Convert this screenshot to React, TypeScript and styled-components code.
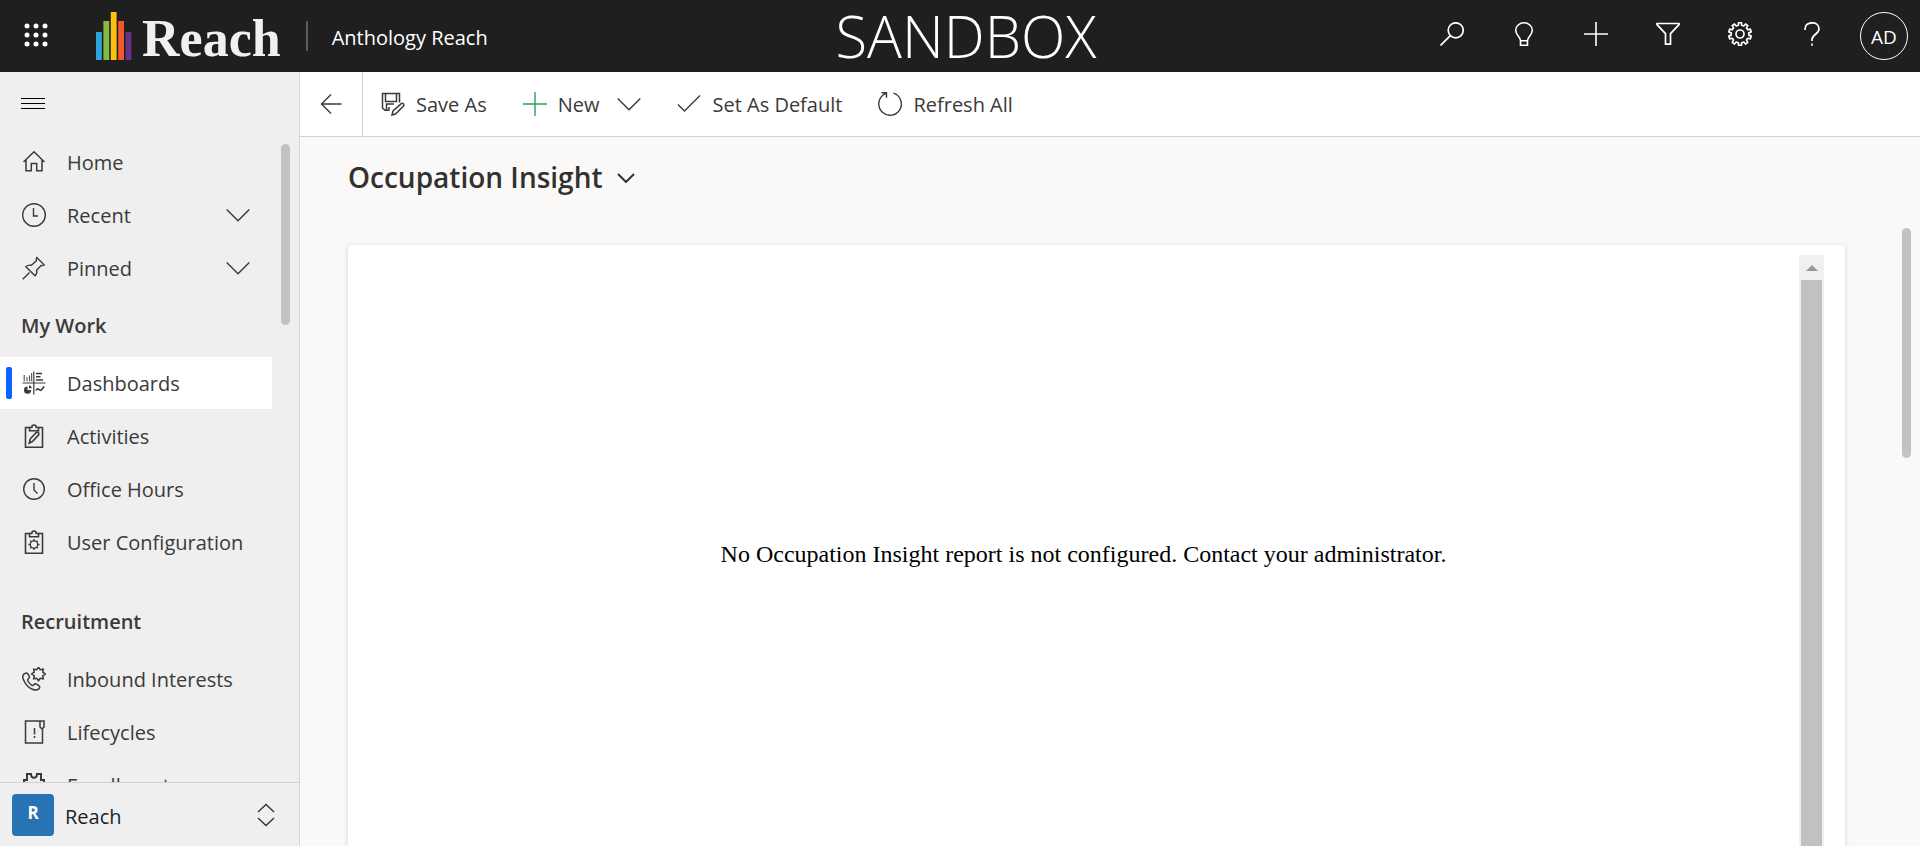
import React from "react";
import styled, { createGlobalStyle, css } from "styled-components";

const GlobalStyle = createGlobalStyle`
  *, *::before, *::after { box-sizing: border-box; }
  html, body { margin: 0; height: 100%; overflow: hidden; }
  body {
    font-family: "Segoe UI", "Open Sans", "Noto Sans", sans-serif;
    font-size: 20px;
    line-height: 28px;
    color: #3b3a39;
    background: #faf9f8;
  }
  button { font: inherit; color: inherit; background: none; border: 0; padding: 0; cursor: pointer; }
  a { color: inherit; text-decoration: none; }
`;

const Page = styled.div`
  display: flex;
  flex-direction: column;
  height: 100vh;
`;

/* ---------- top bar ---------- */

const TopBar = styled.header`
  display: grid;
  grid-template-columns: 1fr auto 1fr;
  flex: none;
  height: 72px;
  background: #1f1f1f;
  color: #fff;
`;

const TopGroup = styled.div<{ $end?: boolean }>`
  display: flex;
  align-items: center;
  justify-content: ${(p) => (p.$end ? "flex-end" : "flex-start")};
`;

const TopButton = styled.button`
  display: flex;
  align-items: center;
  justify-content: center;
  width: 72px;
  height: 72px;
  padding-bottom: 4px;
`;

const WaffleButton = styled(TopButton)`
  width: 71px;
  padding-bottom: 2px;
`;

const AvatarButton = styled(TopButton)`
  padding: 0;
`;

const Avatar = styled.span`
  display: flex;
  align-items: center;
  justify-content: center;
  width: 48px;
  height: 48px;
  border: 1px solid #fff;
  border-radius: 50%;
  font-size: 19px;
  padding-top: 2px;
`;

const Brand = styled.a`
  display: flex;
  align-items: center;
  gap: 10px;
  height: 72px;
  padding: 0 25px;
`;

const BrandName = styled.span`
  font-family: "Liberation Serif", serif;
  font-weight: 700;
  font-size: 52px;
  line-height: 72px;
  padding-top: 6px;
  color: #f0f0f0;
`;

const Divider = styled.span`
  width: 2px;
  height: 30px;
  background: #5c5c5c;
`;

const AppTitle = styled.span`
  padding: 3px 0 0 24px;
  white-space: nowrap;
`;

const Environment = styled.div`
  padding-left: 12px;
  font-size: 58px;
  font-weight: 300;
  line-height: 72px;
`;

/* ---------- body ---------- */

const Body = styled.div`
  display: flex;
  flex: 1;
  min-height: 0;
`;

const Sidebar = styled.aside`
  display: flex;
  flex-direction: column;
  flex: none;
  width: 300px;
  background: #efefef;
  border-right: 1px solid #d6d6d6;
`;

const MenuButton = styled.button`
  display: flex;
  align-items: center;
  flex: none;
  height: 64px;
  padding: 0 21px;
`;

const NavArea = styled.div`
  display: flex;
  flex: 1;
  min-height: 0;
  overflow: hidden;
`;

const NavList = styled.nav`
  display: flex;
  flex-direction: column;
  flex: 1;
  gap: 1px;
`;

const navRow = css`
  display: flex;
  align-items: center;
  flex: none;
  width: 100%;
  height: 52px;
  padding: 0 22px 0 6px;
  text-align: left;
  white-space: nowrap;
`;

const NavLink = styled.a<{ $active?: boolean }>`
  ${navRow}
  background: ${(p) => (p.$active ? "#fff" : "transparent")};
`;

const NavButton = styled.button`
  ${navRow}
`;

const Marker = styled.span<{ $active?: boolean }>`
  flex: none;
  width: 6px;
  height: 32px;
  margin-right: 10px;
  border-radius: 2px;
  background: ${(p) => (p.$active ? "#0a62ff" : "transparent")};
`;

const NavLabel = styled.span`
  flex: 1;
  padding: 2px 0 0 21px;
`;

const NavHeading = styled.h2<{ $spaced?: boolean }>`
  flex: none;
  margin: ${(p) => (p.$spaced ? "22px" : "0")} 0 0;
  padding: 17px 0 16px 21px;
  font-size: 20px;
  line-height: 28px;
  font-weight: 600;
`;

const Rail = styled.div<{ $wide?: boolean }>`
  display: flex;
  justify-content: flex-end;
  flex: none;
  width: ${(p) => (p.$wide ? "75px" : "27px")};
  padding: ${(p) => (p.$wide ? "91px" : "8px")} 9px 0 0;
`;

const Thumb = styled.div<{ $height: string }>`
  width: 9px;
  height: ${(p) => p.$height};
  border-radius: 5px;
  background: #c2c2c2;
`;

const AreaSwitch = styled.button`
  display: flex;
  align-items: center;
  flex: none;
  height: 64px;
  padding: 0 24px 0 12px;
  border-top: 1px solid #d2d2d2;
  text-align: left;
`;

const AreaBadge = styled.span`
  width: 42px;
  height: 42px;
  border-radius: 4px;
  background: #2873b3;
  color: #fff;
  font-size: 17px;
  font-weight: 700;
  line-height: 37px;
  text-align: center;
`;

const AreaName = styled.span`
  flex: 1;
  padding: 4px 0 0 11px;
  font-weight: 500;
  color: #201f1e;
`;

/* ---------- main ---------- */

const Main = styled.main`
  display: flex;
  flex-direction: column;
  flex: 1;
  min-width: 0;
`;

const CommandBar = styled.div`
  display: flex;
  flex: none;
  height: 65px;
  background: #fff;
  border-bottom: 1px solid #d2d2d2;
`;

const BackButton = styled.button`
  display: flex;
  align-items: center;
  justify-content: center;
  width: 63px;
  border-right: 1px solid #d2d2d2;
`;

const Command = styled.button`
  display: flex;
  align-items: center;
  gap: 11px;
  padding: 0 18px;
  white-space: nowrap;
`;

const CommandLabel = styled.span`
  padding-top: 2px;
`;

const MenuArrow = styled.span`
  display: flex;
  padding-left: 7px;
`;

const Content = styled.div`
  display: flex;
  flex: 1;
  min-height: 0;
`;

const Dashboard = styled.div`
  display: flex;
  flex-direction: column;
  flex: 1;
  min-width: 0;
  padding-left: 48px;
`;

const TitleBar = styled.div`
  display: flex;
  align-items: flex-start;
  flex: none;
  height: 108px;
  padding-top: 20px;
`;

const TitleButton = styled.button`
  display: flex;
  align-items: center;
  gap: 14px;
`;

const Title = styled.h1`
  margin: 0;
  font-size: 28px;
  line-height: 40px;
  font-weight: 600;
  color: #323130;
`;

const Card = styled.section`
  display: flex;
  flex: 1;
  min-height: 0;
  padding: 10px 21px 0 24px;
  border-radius: 4px 4px 0 0;
  background: #fff;
  box-shadow: 0 1px 5px rgba(0, 0, 0, 0.16);
`;

const Report = styled.div`
  display: flex;
  align-items: center;
  justify-content: center;
  flex: 1;
  padding: 6px 4px 0 0;
`;

const Message = styled.p`
  margin: 0;
  font-family: "Times New Roman", "Liberation Serif", serif;
  font-size: 24px;
  line-height: 28px;
  color: #000;
`;

const ScrollTrack = styled.div`
  display: flex;
  flex-direction: column;
  width: 25px;
  background: #f0f0f0;
`;

const ScrollButton = styled.button`
  display: flex;
  align-items: center;
  justify-content: center;
  height: 25px;
`;

const ScrollThumb = styled.div`
  flex: 1;
  margin: 0 2px;
  background: #c1c1c1;
`;

/* ---------- icons ---------- */

type IconProps = { children: React.ReactNode; color?: string; weight?: number };

const Icon = ({ children, color = "currentColor", weight = 1.4 }: IconProps) => (
  <svg width="24" height="24" viewBox="0 0 24 24" fill="none" stroke={color} strokeWidth={weight} aria-hidden="true">
    {children}
  </svg>
);

const gearPath = (cx: number, cy: number, outer: number, inner: number, teeth: number, pointed = false) => {
  const pts: string[] = [];
  const step = (Math.PI * 2) / teeth;
  for (let i = 0; i < teeth; i++) {
    const a = i * step - Math.PI / 2;
    const spots: [number, number][] = pointed
      ? [[a, outer], [a + step / 2, inner]]
      : [[a - step * 0.2, outer], [a + step * 0.2, outer], [a + step * 0.3, inner], [a + step * 0.7, inner]];
    spots.forEach(([t, r]) => pts.push(`${(cx + r * Math.cos(t)).toFixed(2)} ${(cy + r * Math.sin(t)).toFixed(2)}`));
  }
  return `M${pts.join("L")}Z`;
};

const Chevron = () => <Icon><path d="M.7 6.5 12 17.8 23.300 6.500" /></Icon>;

const Clipboard = ({ children }: { children: React.ReactNode }) => (
  <Icon weight={1.6}>
    <path d="M7.5 3.5H3.500V23.200h17V3.500h-4" />
    <path d="M7.500 6.800V3.500h2.300c0-3.300 4.400-3.300 4.400 0h2.300v3.300z" />
    {children}
  </Icon>
);

const icons = {
  home: <Icon weight={1.5}><path d="M1.500 12 12 1.800 22.500 12M4 10v10.800h5.300v-7.300h5.400v7.300H20V10" /></Icon>,
  recent: <Icon><circle cx="12" cy="12" r="11.300" /><path d="M11.500 5v8H16" /></Icon>,
  pinned: <Icon><path d="M.7 23.300 7.600 16.400M14.800 1.500l7.500 7.500c-1.600 1-3.200.5-3.200.5l-4.500 4.800c.6 2.200.1 4-1.500 5.500L3.800 10.700c1.600-1.500 3.600-1.900 5.600-1.400l5-4.600s-.5-1.600.4-3.200z" /></Icon>,
  dashboards: (
    <Icon weight={1.2}>
      <path d="M.5 12h23M11.800.5v23" />
      <path d="M2.200 4v6.300M5 6v4.300M7.600 4.500v5.800M9.700 2v8.300" strokeWidth="1" />
      <path d="M14 2.500h6M14 5.800h4.500M14 9h7" strokeWidth="1.500" />
      <path d="M5.500 15.500v3.500h3.700a3.600 3.600 0 1 1-3.700-3.500z" fill="currentColor" stroke="none" />
      <path d="M7 14.300a3.200 3.200 0 0 1 2.800 2.900H7z" fill="currentColor" stroke="none" />
      <path d="M14 19.500c1-2 2-2 3-1s1.500 1.200 2.300.5l2.900-3.500" strokeWidth="1.600" />
    </Icon>
  ),
  activities: <Clipboard><path d="M7.300 19.200l1-4.400 6-6.300c1.800-1 3.400.7 2.300 2.400l-6 6.500z" /></Clipboard>,
  officeHours: <Icon><circle cx="12" cy="12" r="10.300" /><path d="M12 6v7l3.500 3.500" /></Icon>,
  userConfiguration: (
    <Clipboard>
      <circle cx="12" cy="14.500" r="3.700" strokeWidth="1.300" />
      <path d="M12 9v2M12 18v2M6.500 14.500h2M15.500 14.500h2M8.100 10.600l1.400 1.400M14.500 17l1.400 1.400M8.100 18.400 9.500 17M14.500 12l1.400-1.400" strokeWidth="1.300" />
    </Clipboard>
  ),
  inbound: (
    <Icon weight={1.5}>
      <path d={gearPath(16.5, 7, 6.800, 4.600, 8, true)} />
      <path d="M3.300 6.200C.5 7.200.2 10 1.700 13.300c2 4.500 5.500 8 9.300 9.200 3.400 1 5.800.3 6.600-1.800.3-1-.2-1.600-.8-2l-2.300-1.500c-1-.6-2-.3-2.800.6-.6.800-1.300.9-2.200.3-1.700-1.200-3-2.700-3.700-4.300-.4-1 0-1.600.8-2.200.9-.7 1.100-1.500.6-2.500L5.800 6.800c-.6-.9-1.500-1-2.500-.6z" />
    </Icon>
  ),
  lifecycles: <Icon weight={1.5}><path d="M18 1H3.500v22h17V9M18 1h4v6l-2 2-2-2zM12.500 8v6.500M12.500 16v2" /></Icon>,
  enrollments: <Icon weight={2}><path d="M2 10V7h3V1h4c0 5 6 5 6 0h4v6h3v15H2z" /></Icon>,
  saveAs: (
    <Icon weight={1.5}>
      <path d="M8.500 18.300H4L1.500 16V1.500h17v9M4.500 1.500v8h11v-8M5.500 18v-6H13M8 18v-3" />
      <path d="M11 23l1-4 8.500-7.500c1.700-.7 3 .9 2 2.500L14.500 22z" />
    </Icon>
  ),
  plus: <Icon weight={1.6}><path d="M12 0v24M0 12h24" /></Icon>,
  plusGreen: <Icon color="#2f9e5b"><path d="M12 0v24M0 12h24" /></Icon>,
  check: <Icon><path d="M1 12.500l6.500 6.500L23 3.500" /></Icon>,
  refresh: <Icon><path d="M15.500 1.200A11.300 11.300 0 1 1 5.600 2.700L9 1M3.500.8h5v5" /></Icon>,
  back: <Icon><path d="M22.500 12h-20M12 2.500 2.500 12l9.500 9.500" /></Icon>,
  search: <Icon weight={1.7}><circle cx="15.700" cy="8.300" r="7.500" /><path d="M10.300 13.700.5 23.500" /></Icon>,
  bulb: <Icon weight={1.6}><path d="M8.500 18.500c0-3.500-4.800-5.500-4.800-10.200a8.300 7.500 0 0 1 16.600 0c0 4.700-4.800 6.700-4.800 10.200v4.700h-7zM8.500 18.800h7" /></Icon>,
  filter: <Icon weight={1.7}><path d="M1 1.500h22v1.200l-8.500 9v10.500h-5V11.700L1 2.700z" /></Icon>,
  gear: <Icon weight={1.7}><path strokeLinejoin="round" d={gearPath(12, 12, 11.400, 8.900, 10)} /><circle cx="12" cy="12" r="4" /></Icon>,
  help: <Icon weight={1.7}><path d="M5 8C4.800 3.500 7.500.8 12 .8S19 3.500 19 7c0 5-7 5.500-7 10.500V19M12 21.500v2.300" /></Icon>,
};

const Waffle = () => (
  <svg width="24" height="24" viewBox="0 0 24 24" fill="#fff" aria-hidden="true">
    {[3, 12, 21].map((y) => [3, 12, 21].map((x) => <circle key={`${x}-${y}`} cx={x} cy={y} r="2.500" />))}
  </svg>
);

const bars = [
  { top: 20, fill: "#2ea3dc" },
  { top: 9, fill: "#83bb41" },
  { top: 0, fill: "#fdc010" },
  { top: 9, fill: "#f0592a" },
  { top: 20, fill: "#653189" },
];

const BrandMark = () => (
  <svg width="36" height="48" viewBox="0 0 36 48" aria-hidden="true">
    {bars.map((b, i) => <rect key={b.fill} x={i * 7.4} y={b.top} width="5.800" height={48 - b.top} fill={b.fill} />)}
  </svg>
);

/* ---------- page ---------- */

type Item = { label: string; icon: React.ReactNode; active?: boolean };

const work: Item[] = [
  { label: "Dashboards", icon: icons.dashboards, active: true },
  { label: "Activities", icon: icons.activities },
  { label: "Office Hours", icon: icons.officeHours },
  { label: "User Configuration", icon: icons.userConfiguration },
];

const recruitment: Item[] = [
  { label: "Inbound Interests", icon: icons.inbound },
  { label: "Lifecycles", icon: icons.lifecycles },
  { label: "Enrollments", icon: icons.enrollments },
];

const topActions = [
  { label: "Search", icon: icons.search },
  { label: "Tips", icon: icons.bulb },
  { label: "Quick create", icon: icons.plus },
  { label: "Filter", icon: icons.filter },
  { label: "Settings", icon: icons.gear },
  { label: "Help", icon: icons.help },
];

const NavItem = ({ label, icon, active }: Item) => (
  <NavLink href="#" $active={active} aria-current={active ? "page" : undefined}>
    <Marker $active={active} />
    {icon}
    <NavLabel>{label}</NavLabel>
  </NavLink>
);

const NavGroup = ({ label, icon }: Item) => (
  <NavButton type="button" aria-expanded={false}>
    <Marker />
    {icon}
    <NavLabel>{label}</NavLabel>
    <Chevron />
  </NavButton>
);

export default function App() {
  return (
    <Page>
      <GlobalStyle />
      <TopBar>
        <TopGroup>
          <WaffleButton type="button" aria-label="App launcher"><Waffle /></WaffleButton>
          <Brand href="#">
            <BrandMark />
            <BrandName>Reach</BrandName>
          </Brand>
          <Divider />
          <AppTitle>Anthology Reach</AppTitle>
        </TopGroup>
        <Environment>SANDBOX</Environment>
        <TopGroup $end>
          {topActions.map((a) => (
            <TopButton key={a.label} type="button" aria-label={a.label}>{a.icon}</TopButton>
          ))}
          <AvatarButton type="button" aria-label="Account"><Avatar>AD</Avatar></AvatarButton>
        </TopGroup>
      </TopBar>
      <Body>
        <Sidebar>
          <MenuButton type="button" aria-label="Toggle navigation">
            <svg width="24" height="12" viewBox="0 0 24 12" stroke="#000" aria-hidden="true">
              <path d="M0 .5h24M0 5.500h24M0 10.500h24" />
            </svg>
          </MenuButton>
          <NavArea>
            <NavList aria-label="Site map">
              <NavItem label="Home" icon={icons.home} />
              <NavGroup label="Recent" icon={icons.recent} />
              <NavGroup label="Pinned" icon={icons.pinned} />
              <NavHeading>My Work</NavHeading>
              {work.map((i) => <NavItem key={i.label} {...i} />)}
              <NavHeading $spaced>Recruitment</NavHeading>
              {recruitment.map((i) => <NavItem key={i.label} {...i} />)}
            </NavList>
            <Rail><Thumb $height="181px" /></Rail>
          </NavArea>
          <AreaSwitch type="button">
            <AreaBadge>R</AreaBadge>
            <AreaName>Reach</AreaName>
            <svg width="18" height="24" viewBox="0 0 18 24" fill="none" stroke="#333" strokeWidth="1.400" aria-hidden="true">
              <path d="M1 9l8-7.500L17 9M1 15l8 7.500 8-7.500" />
            </svg>
          </AreaSwitch>
        </Sidebar>
        <Main>
          <CommandBar role="toolbar">
            <BackButton type="button" aria-label="Back">{icons.back}</BackButton>
            <Command type="button">{icons.saveAs}<CommandLabel>Save As</CommandLabel></Command>
            <Command type="button">
              {icons.plusGreen}
              <CommandLabel>New</CommandLabel>
              <MenuArrow><Chevron /></MenuArrow>
            </Command>
            <Command type="button">{icons.check}<CommandLabel>Set As Default</CommandLabel></Command>
            <Command type="button">{icons.refresh}<CommandLabel>Refresh All</CommandLabel></Command>
          </CommandBar>
          <Content>
            <Dashboard>
              <TitleBar>
                <TitleButton type="button">
                  <Title>Occupation Insight</Title>
                  <svg width="18" height="12" viewBox="0 0 18 12" fill="none" stroke="#323130" strokeWidth="2" aria-hidden="true">
                    <path d="M1 3l8 8 8-8" />
                  </svg>
                </TitleButton>
              </TitleBar>
              <Card>
                <Report>
                  <Message>No Occupation Insight report is not configured. Contact your administrator.</Message>
                </Report>
                <ScrollTrack>
                  <ScrollButton type="button" aria-label="Scroll up">
                    <svg width="12" height="6" viewBox="0 0 12 6" fill="#999" aria-hidden="true"><path d="M0 6 6 0l6 6z" /></svg>
                  </ScrollButton>
                  <ScrollThumb />
                </ScrollTrack>
              </Card>
            </Dashboard>
            <Rail $wide><Thumb $height="230px" /></Rail>
          </Content>
        </Main>
      </Body>
    </Page>
  );
}
